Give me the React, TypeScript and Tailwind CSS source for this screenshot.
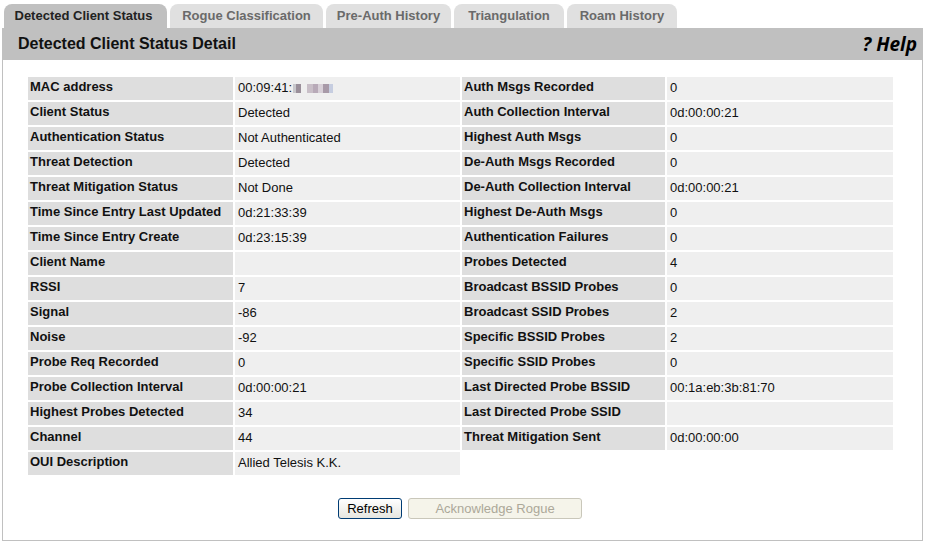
import React from "react";

const left: [string, React.ReactNode][] = [
  ["MAC address", "mac"],
  ["Client Status", "Detected"],
  ["Authentication Status", "Not Authenticated"],
  ["Threat Detection", "Detected"],
  ["Threat Mitigation Status", "Not Done"],
  ["Time Since Entry Last Updated", "0d:21:33:39"],
  ["Time Since Entry Create", "0d:23:15:39"],
  ["Client Name", ""],
  ["RSSI", "7"],
  ["Signal", "-86"],
  ["Noise", "-92"],
  ["Probe Req Recorded", "0"],
  ["Probe Collection Interval", "0d:00:00:21"],
  ["Highest Probes Detected", "34"],
  ["Channel", "44"],
  ["OUI Description", "Allied Telesis K.K."],
];

const right: [string, string][] = [
  ["Auth Msgs Recorded", "0"],
  ["Auth Collection Interval", "0d:00:00:21"],
  ["Highest Auth Msgs", "0"],
  ["De-Auth Msgs Recorded", "0"],
  ["De-Auth Collection Interval", "0d:00:00:21"],
  ["Highest De-Auth Msgs", "0"],
  ["Authentication Failures", "0"],
  ["Probes Detected", "4"],
  ["Broadcast BSSID Probes", "0"],
  ["Broadcast SSID Probes", "2"],
  ["Specific BSSID Probes", "2"],
  ["Specific SSID Probes", "0"],
  ["Last Directed Probe BSSID", "00:1a:eb:3b:81:70"],
  ["Last Directed Probe SSID", ""],
  ["Threat Mitigation Sent", "0d:00:00:00"],
];

const tabs = [
  { name: "Detected Client Status", w: "w-[163px]", active: true },
  { name: "Rogue Classification", w: "w-[153px]" },
  { name: "Pre-Auth History", w: "w-[125px]" },
  { name: "Triangulation", w: "w-[110px]" },
  { name: "Roam History", w: "w-[110px]" },
];

function Mac() {
  return (
    <span className="inline-flex items-center">
      00:09:41:
      <span className="inline-flex items-center ml-[1px]">
        <span className="w-[3px] h-[9px] bg-[#c8c8cc]" />
        <span className="w-[5px] h-[9px] bg-[#9a8f9a]" />
        <span className="w-[6px] h-[9px] bg-[#efefef]" />
        <span className="w-[6px] h-[9px] bg-[#c9bfc8]" />
        <span className="w-[5px] h-[9px] bg-[#b8aab8]" />
        <span className="w-[5px] h-[9px] bg-[#d8d0d8]" />
        <span className="w-[6px] h-[9px] bg-[#a89aa8]" />
        <span className="w-[4px] h-[9px] bg-[#c6cde0]" />
      </span>
    </span>
  );
}

function Label({ children }: { children: React.ReactNode }) {
  return (
    <div className="h-[23px] bg-[#dedede] pl-[2px] pt-[2px] text-[13px] font-bold text-[#111] leading-[16px] whitespace-nowrap">
      {children}
    </div>
  );
}

function Value({ children }: { children: React.ReactNode }) {
  return (
    <div className="h-[23px] bg-[#efefef] pl-[3px] pt-[3px] text-[13px] text-[#111] leading-[16px] whitespace-nowrap">
      {children}
    </div>
  );
}

export default function App() {
  const cells: React.ReactNode[] = [];
  left.forEach(([l, v], i) => {
    cells.push(<Label key={"l" + i}>{l}</Label>);
    cells.push(<Value key={"v" + i}>{v === "mac" ? <Mac /> : v}</Value>);
    if (right[i]) {
      cells.push(<Label key={"rl" + i}>{right[i][0]}</Label>);
      cells.push(<Value key={"rv" + i}>{right[i][1]}</Value>);
    } else {
      cells.push(<div key={"e1" + i} />);
      cells.push(<div key={"e2" + i} />);
    }
  });

  return (
    <div
      className="w-[925px] h-[544px] bg-white overflow-hidden"
      style={{ fontFamily: '"Liberation Sans", Arial, sans-serif' }}
    >
      <div className="pt-[4px] pl-[4px] flex gap-[3px] h-[28px]">
        {tabs.map((t) => (
          <div
            key={t.name}
            className={
              t.w +
              " h-[24px] rounded-t-[8px] flex items-center justify-center text-[13px] font-bold " +
              (t.active ? "bg-[#c0c0c0] text-[#222] pr-[4px]" : "bg-[#e0e0e0] text-[#6a6a6a]")
            }
          >
            {t.name}
          </div>
        ))}
      </div>
      <div className="ml-[2px] w-[921px]">
        <div className="h-[32px] bg-[#c0c0c0] flex items-center justify-between pl-[16px] pr-[6px]">
          <div className="text-[16px] font-bold text-[#111]">Detected Client Status Detail</div>
          <div
            className="text-[19px] font-bold italic text-black"
            style={{ fontFamily: '"Open Sans", sans-serif' }}
          >
            ? Help
          </div>
        </div>
        <div className="h-[481px] border-x border-b border-[#c0c0c0] pt-[17px] pl-[25px]">
          <div className="grid grid-cols-[205px_225px_203px_226px] gap-[2px]">{cells}</div>
          <div className="flex gap-[6px] mt-[23px] ml-[310px]">
            <button className="w-[64px] h-[21px] border border-[#003c74] rounded-[3px] bg-gradient-to-b from-white to-[#e6e6e0] text-[13px] leading-[16px] text-black">
              Refresh
            </button>
            <button
              disabled
              className="w-[174px] h-[21px] border border-[#c9c7ba] rounded-[3px] bg-[#f5f4ea] text-[13px] leading-[16px] text-[#aca899]"
            >
              Acknowledge Rogue
            </button>
          </div>
        </div>
      </div>
    </div>
  );
}
